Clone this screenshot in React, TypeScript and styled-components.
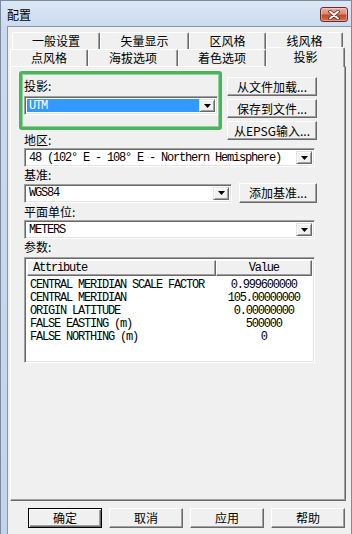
import React from "react"
import styled, { createGlobalStyle } from "styled-components"

const CJK = `"Noto Sans CJK SC", "Liberation Sans", sans-serif`
const MONO = `"Liberation Mono", "Noto Sans CJK SC", monospace`

const GlobalStyle = createGlobalStyle`
	html, body {
		margin: 0;
		padding: 0;
		background: #c8d8ed;
	}
	body {
		font-family: ${CJK};
		font-size: 12px;
		color: #000;
	}
`

// 窗口外框 (Win7 basic)
const Window = styled.div`
	width: 352px;
	height: 534px;
	box-sizing: border-box;
	display: flex;
	flex-direction: column;
	background: linear-gradient(to bottom, #dce7f5 0px, #cbdaee 26px, #c3d4ea 100%);
	border: 1px solid #7b8a9e;
	border-bottom: none;
	overflow: hidden;
`

const TitleBar = styled.div`
	height: 25px;
	flex: none;
	display: flex;
	align-items: center;
	justify-content: space-between;
	padding: 0 3px 0 6px;
`

const Title = styled.span`
	font-size: 12px;
	line-height: 14px;
	margin-top: 3px;
`

const CloseButton = styled.div`
	width: 28px;
	height: 15px;
	margin-top: 2px;
	box-sizing: border-box;
	border: 1px solid #6f2b22;
	border-radius: 3px;
	background: linear-gradient(to bottom, #e9b0a2 0%, #d98a73 45%, #c4472e 55%, #d4704f 100%);
	box-shadow: inset 0 0 0 1px rgba(255, 255, 255, 0.35);
	display: flex;
	align-items: center;
	justify-content: center;
`

const Client = styled.div`
	flex: 1;
	margin-left: 6px;
	background: #f0f0f0;
	border: 1px solid #8797ab;
	border-bottom: none;
	border-right: none;
	padding: 5px 0 0 2px;
	display: flex;
	flex-direction: column;
`

const TabRow = styled.div<{ $indent: number }>`
	display: flex;
	height: 17px;
	padding-left: ${(p) => p.$indent}px;
`

const Tab = styled.div<{ $w: number; $active?: boolean }>`
	position: relative;
	z-index: ${(p) => (p.$active ? 2 : 0)};
	width: ${(p) => p.$w}px;
	height: ${(p) => (p.$active ? 20 : 17)}px;
	margin-top: ${(p) => (p.$active ? -2 : 0)}px;
	box-sizing: border-box;
	border-top: 1px solid #fff;
	border-left: 1px solid #fff;
	border-right: 1px solid #696969;
	box-shadow: inset -1px 0 0 #a0a0a0;
	border-radius: 2px 2px 0 0;
	background: #f0f0f0;
	display: flex;
	align-items: ${(p) => (p.$active ? "flex-start" : "center")};
	justify-content: center;
	padding-top: ${(p) => (p.$active ? 2 : 0)}px;
	font-family: ${CJK};
	font-size: 12px;
	line-height: 14px;
`

const Panel = styled.div`
	width: 336px;
	height: 435px;
	box-sizing: border-box;
	border: 1px solid;
	border-color: #fff #696969 #696969 #fff;
	box-shadow: inset -1px -1px 0 #a0a0a0;
	padding: 4px 0 0 8px;
	display: flex;
	flex-direction: column;
`

const TopSection = styled.div`
	display: flex;
	align-items: flex-start;
`

const LeftCol = styled.div`
	display: flex;
	flex-direction: column;
`

const GreenBox = styled.div`
	width: 203px;
	height: 59px;
	box-sizing: border-box;
	border: 3px solid #4bb35c;
	border-radius: 3px;
	box-shadow: inset 0 0 0 1px #8fd39a;
	padding: 0 0 0 2px;
	display: flex;
	flex-direction: column;
`

const Label = styled.div<{ $mt?: number; $indent?: number }>`
	height: 16px;
	line-height: 16px;
	margin-top: ${(p) => p.$mt ?? 0}px;
	margin-left: ${(p) => p.$indent ?? 0}px;
	font-family: ${CJK};
	font-size: 12px;
`

const ButtonCol = styled.div`
	display: flex;
	flex-direction: column;
	gap: 3px;
	margin-left: 5px;
	padding-top: 6px;
`

const Button = styled.div<{ $w: number; $h?: number; $default?: boolean }>`
	width: ${(p) => p.$w}px;
	height: ${(p) => p.$h ?? 19}px;
	box-sizing: border-box;
	background: #f0f0f0;
	border: 1px solid;
	border-color: ${(p) => (p.$default ? "#000" : "#fff #696969 #696969 #fff")};
	box-shadow: ${(p) =>
		p.$default
			? "inset 1px 1px 0 #fff, inset -1px -1px 0 #696969, inset -2px -2px 0 #a0a0a0"
			: "inset -1px -1px 0 #a0a0a0"};
	display: flex;
	align-items: center;
	justify-content: center;
	font-family: ${CJK};
	font-size: 12px;
	line-height: 14px;
	white-space: nowrap;
`

const Body = styled.div`
	display: flex;
	flex-direction: column;
	margin-left: 5px;
`

const Combo = styled.div<{ $w: number }>`
	width: ${(p) => p.$w}px;
	height: 19px;
	box-sizing: border-box;
	border: 1px solid;
	border-color: #a0a0a0 #fff #fff #a0a0a0;
	box-shadow: inset 1px 1px 0 #696969, inset -1px -1px 0 #e3e3e3;
	background: #fff;
	padding: 2px;
	display: flex;
	align-items: stretch;
`

const ComboText = styled.div<{ $selected?: boolean }>`
	flex: 1;
	display: flex;
	align-items: center;
	padding-left: 2px;
	background: ${(p) => (p.$selected ? "#3399ff" : "transparent")};
	color: ${(p) => (p.$selected ? "#fff" : "#000")};
	font-family: ${MONO};
	font-size: 12px;
	letter-spacing: -1.2px;
	white-space: nowrap;
	overflow: hidden;
`

const DropButton = styled.div`
	width: 16px;
	box-sizing: border-box;
	background: #f0f0f0;
	border: 1px solid;
	border-color: #e3e3e3 #696969 #696969 #e3e3e3;
	box-shadow: inset 1px 1px 0 #fff, inset -1px -1px 0 #a0a0a0;
	display: flex;
	align-items: center;
	justify-content: center;
`

const FieldRow = styled.div`
	display: flex;
	align-items: center;
	gap: 7px;
	height: 20px;
`

const ListBox = styled.div`
	width: 291px;
	height: 106px;
	margin-top: 2px;
	box-sizing: border-box;
	border: 1px solid;
	border-color: #a0a0a0 #fff #fff #a0a0a0;
	box-shadow: inset 1px 1px 0 #696969, inset -1px -1px 0 #e3e3e3;
	background: #fff;
	padding: 2px;
	display: flex;
	flex-direction: column;
`

const HeaderRow = styled.div`
	display: flex;
	height: 16px;
`

const HeaderCell = styled.div<{ $w: number; $align: "left" | "center" }>`
	width: ${(p) => p.$w}px;
	box-sizing: border-box;
	background: #f0f0f0;
	border: 1px solid;
	border-color: #fff #696969 #696969 #fff;
	box-shadow: inset -1px -1px 0 #a0a0a0;
	display: flex;
	align-items: center;
	justify-content: ${(p) => (p.$align === "left" ? "flex-start" : "center")};
	padding-left: ${(p) => (p.$align === "left" ? 5 : 0)}px;
	font-family: ${MONO};
	font-size: 12px;
	letter-spacing: -1.2px;
`

const Rows = styled.div`
	padding-top: 2px;
	display: flex;
	flex-direction: column;
`

const DataRow = styled.div`
	display: flex;
	height: 13px;
	align-items: center;
	font-family: ${MONO};
	font-size: 12px;
	letter-spacing: -1.2px;
	white-space: nowrap;
`

const AttrCell = styled.div`
	width: 190px;
	padding-left: 3px;
	box-sizing: border-box;
`

const ValueCell = styled.div`
	width: 97px;
	text-align: center;
`

const Footer = styled.div`
	display: flex;
	gap: 7px;
	padding-left: 18px;
	margin-top: 7px;
`

const Arrow = () => (
	<svg width="7" height="4" viewBox="0 0 7 4">
		<path d="M0 0h7L3.5 4z" fill="#000" />
	</svg>
)

const ComboBox = ({ w, text, selected }: { w: number; text: string; selected?: boolean }) => (
	<Combo $w={w}>
		<ComboText $selected={selected}>{text}</ComboText>
		<DropButton>
			<Arrow />
		</DropButton>
	</Combo>
)

const params = [
	["CENTRAL MERIDIAN SCALE FACTOR", "0.999600000"],
	["CENTRAL MERIDIAN", "105.00000000"],
	["ORIGIN LATITUDE", "0.00000000"],
	["FALSE EASTING (m)", "500000"],
	["FALSE NORTHING (m)", "0"],
]

export default function App() {
	return (
		<>
			<GlobalStyle />
			<Window>
				<TitleBar>
					<Title>配置</Title>
					<CloseButton>
						<svg width="12" height="10" viewBox="0 0 12 10">
							<path d="M2 1.5l8 7M10 1.5l-8 7" stroke="#5a1d14" strokeWidth="3.4" strokeLinecap="round" />
							<path d="M2 1.5l8 7M10 1.5l-8 7" stroke="#fff" strokeWidth="2" strokeLinecap="round" />
						</svg>
					</CloseButton>
				</TitleBar>
				<Client>
					<TabRow $indent={2}>
						<Tab $w={88}>一般设置</Tab>
						<Tab $w={89}>矢量显示</Tab>
						<Tab $w={77}>区风格</Tab>
						<Tab $w={77}>线风格</Tab>
					</TabRow>
					<TabRow $indent={0}>
						<Tab $w={78}>点风格</Tab>
						<Tab $w={90}>海拔选项</Tab>
						<Tab $w={88}>着色选项</Tab>
						<Tab $w={79} $active>
							投影
						</Tab>
					</TabRow>
					<Panel>
						<TopSection>
							<LeftCol>
								<GreenBox>
									<Label $mt={4}>投影:</Label>
									<div style={{ marginTop: 2 }}>
										<ComboBox w={194} text="UTM" selected />
									</div>
								</GreenBox>
								<Label $mt={2} $indent={5}>
									地区:
								</Label>
							</LeftCol>
							<ButtonCol>
								<Button $w={90}>从文件加载...</Button>
								<Button $w={90}>保存到文件...</Button>
								<Button $w={90}>从EPSG输入...</Button>
							</ButtonCol>
						</TopSection>
						<Body>
							<ComboBox w={291} text="48 (102° E - 108° E - Northern Hemisphere)" />
							<Label>基准:</Label>
							<FieldRow>
								<ComboBox w={208} text="WGS84" />
								<Button $w={78} $h={20}>
									添加基准...
								</Button>
							</FieldRow>
							<Label $mt={1}>平面单位:</Label>
							<ComboBox w={291} text="METERS" />
							<Label>参数:</Label>
							<ListBox>
								<HeaderRow>
									<HeaderCell $w={190} $align="left">
										Attribute
									</HeaderCell>
									<HeaderCell $w={97} $align="center">
										Value
									</HeaderCell>
								</HeaderRow>
								<Rows>
									{params.map(([a, v]) => (
										<DataRow key={a}>
											<AttrCell>{a}</AttrCell>
											<ValueCell>{v}</ValueCell>
										</DataRow>
									))}
								</Rows>
							</ListBox>
						</Body>
					</Panel>
					<Footer>
						<Button $w={74} $h={20} $default>
							确定
						</Button>
						<Button $w={74} $h={20}>
							取消
						</Button>
						<Button $w={74} $h={20}>
							应用
						</Button>
						<Button $w={74} $h={20}>
							帮助
						</Button>
					</Footer>
				</Client>
			</Window>
		</>
	)
}
